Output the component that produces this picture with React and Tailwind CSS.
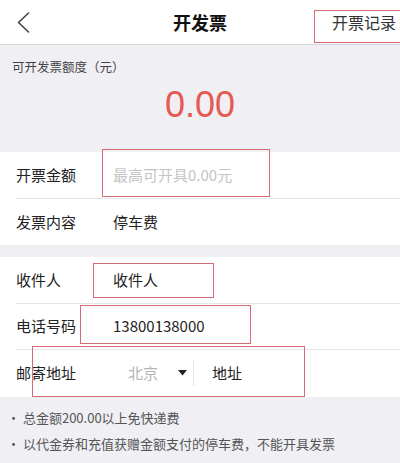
import React from "react";

const font = { fontFamily: '"Noto Sans CJK SC", "Noto Sans", sans-serif' };

function Row({ label, children, border }) {
  return (
    <div className={"ml-[16px] flex items-center h-[46.5px] " + (border ? "border-b border-[#e5e5e5]" : "")}>
      <div className="w-[97px] text-[15px] text-[#222]">{label}</div>
      <div className="flex-1 flex items-center text-[15px] text-[#222]">{children}</div>
    </div>
  );
}

export default function App() {
  return (
    <div className="relative w-[400px] h-[463px] overflow-hidden bg-[#efeff4]" style={font}>
      {/* header */}
      <div className="grid grid-cols-[1fr_auto_1fr] items-center h-[45px] bg-white border-b border-[#d6d6d8]">
        <div className="pl-[17px] flex items-center">
          <svg width="13" height="21" viewBox="0 0 13 21" fill="none">
            <path d="M11.5 1 L1.5 10.5 L11.5 20" stroke="#444" strokeWidth="1.6" strokeLinecap="round" strokeLinejoin="round" />
          </svg>
        </div>
        <div className="text-[18px] font-bold text-[#111]">开发票</div>
        <div className="flex justify-end pr-[4px] text-[16px] text-[#333]">开票记录</div>
      </div>

      {/* amount */}
      <div className="h-[107px] flex flex-col">
        <div className="pl-[12px] pt-[13px] text-[12.5px] text-[#444]">可开发票额度（元）</div>
        <div className="flex justify-center pt-[10px]">
          <span className="text-[36px] leading-none text-[#e55a52]" style={{ fontFamily: '"Liberation Sans", Arial, sans-serif' }}>0.00</span>
        </div>
      </div>

      {/* section 1 */}
      <div className="bg-white">
        <Row label="开票金额" border>
          <span className="text-[#c4c4c6]">最高可开具0.00元</span>
        </Row>
        <Row label="发票内容">停车费</Row>
      </div>

      <div className="h-[12px]" />

      {/* section 2 */}
      <div className="bg-white">
        <Row label="收件人" border>收件人</Row>
        <Row label="电话号码" border>13800138000</Row>
        <Row label="邮寄地址">
          <div className="flex items-center">
            <span className="ml-[15px] text-[#b4b4b6]">北京</span>
            <svg className="ml-[20px]" width="9" height="6" viewBox="0 0 9 6">
              <path d="M0 0 H9 L4.5 5.5 Z" fill="#222" />
            </svg>
            <div className="ml-[6px] w-px h-[26px] bg-[#e2e2e2]" />
            <span className="ml-[18px]">地址</span>
          </div>
        </Row>
      </div>

      {/* notes */}
      <div className="pt-[8px] pl-[7px] text-[13px] leading-[26px] text-[#555]">
        <div>· 总金额200.00以上免快递费</div>
        <div>· 以代金券和充值获赠金额支付的停车费，不能开具发票</div>
      </div>

      {/* annotation boxes */}
      <div className="absolute left-[314px] top-[10px] w-[100px] h-[33px] border-[1.5px] border-[#d46c74]" />
      <div className="absolute left-[102px] top-[149px] w-[168px] h-[48px] border-[1.5px] border-[#d46c74]" />
      <div className="absolute left-[93px] top-[263px] w-[121px] h-[35px] border-[1.5px] border-[#d46c74]" />
      <div className="absolute left-[80px] top-[305px] w-[171px] h-[39px] border-[1.5px] border-[#d46c74]" />
      <div className="absolute left-[32px] top-[346px] w-[273px] h-[51px] border-[1.5px] border-[#d46c74]" />
    </div>
  );
}
